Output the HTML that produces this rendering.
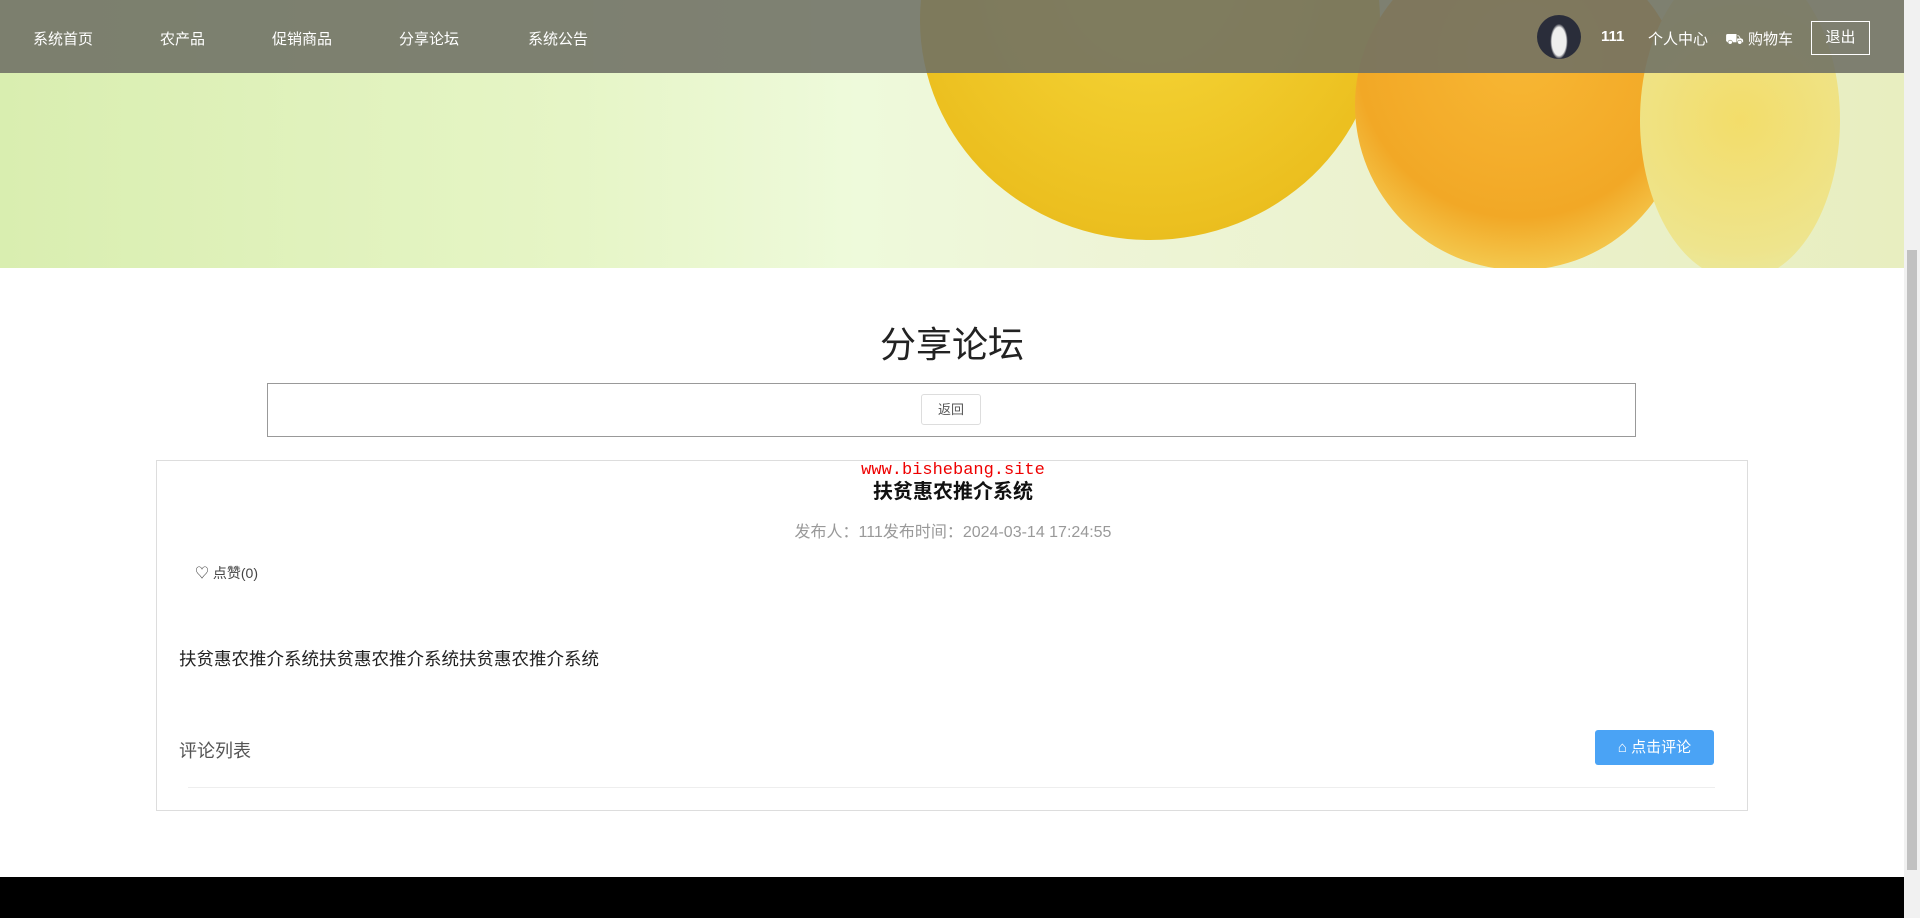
<!DOCTYPE html>
<html><head><meta charset="utf-8">
<style>
*{margin:0;padding:0;box-sizing:border-box}
body{width:1920px;height:918px;overflow:hidden;background:#fff;font-family:"Liberation Sans","Noto Sans CJK SC",sans-serif;position:relative}
.banner{position:absolute;left:0;top:0;width:1904px;height:268px;overflow:hidden;
background:linear-gradient(90deg,#d9eeb0 0%,#e6f5c6 30%,#eefadb 45%,#eef5d8 55%,#e8eec0 100%)}
.l1{position:absolute;left:920px;top:-200px;width:460px;height:440px;border-radius:50%;background:radial-gradient(circle at 50% 40%,#f6d83a,#ecc020 70%,#e2b418)}
.l2{position:absolute;left:1355px;top:-60px;width:330px;height:330px;border-radius:50%;background:radial-gradient(circle at 50% 35%,#f7b734,#f2a826 60%,#f4d25a 85%,#f8ef8a)}
.l3{position:absolute;left:1640px;top:-40px;width:200px;height:320px;border-radius:50%;background:radial-gradient(circle,#f3dd6a,#eee48c 70%,#e8eca8)}
.nav{position:absolute;left:0;top:0;width:1904px;height:73px;background:rgba(110,112,100,.88)}
.nav a{position:absolute;top:28px;color:#fff;font-size:15px;text-decoration:none}
.av{position:absolute;left:1537px;top:15px;width:44px;height:44px;border-radius:50%;background:radial-gradient(ellipse 20% 40% at 50% 60%,#eee 80%,#2a2d3a 100%)}
.out{position:absolute;left:1811px;top:21px;width:59px;height:34px;border:1px solid #fff;color:#fff;font-size:15px;text-align:center;line-height:32px}
.sb{position:absolute;right:0;top:0;width:16px;height:918px;background:#f1f1f1}
.sb i{position:absolute;left:3px;top:250px;width:10px;height:620px;background:#c1c1c1}
h1{position:absolute;left:0;width:1904px;top:316px;text-align:center;font-size:36px;font-weight:normal;color:#222}
.bar{position:absolute;left:267px;top:383px;width:1369px;height:54px;border:1px solid #999}
.back{position:absolute;left:653px;top:10px;width:60px;height:31px;border:1px solid #ddd;border-radius:3px;font-size:13px;color:#555;text-align:center;line-height:29px}
.card{position:absolute;left:156px;top:460px;width:1592px;height:351px;border:1px solid #ddd}
.wm{position:absolute;left:0;width:1592px;top:0;text-align:center;color:#e00;font-family:"Liberation Mono",monospace;font-size:17px}
.t{position:absolute;left:0;width:1592px;top:14px;text-align:center;font-size:20px;font-weight:bold;color:#111}
.m{position:absolute;left:0;width:1592px;top:57px;text-align:center;font-size:16px;color:#999}
.z{position:absolute;left:38px;top:102px;font-size:14px;color:#444}
.c{position:absolute;left:22px;top:185px;font-size:17.5px;color:#222}
.pl{position:absolute;left:22px;top:276px;font-size:18px;color:#555}
.btn{position:absolute;left:1438px;top:269px;width:119px;height:35px;background:#4aa3f5;border-radius:3px;color:#fff;font-size:15px;line-height:35px;text-align:center}
.hr{position:absolute;left:31px;top:326px;width:1527px;height:1px;background:#eee}
.ft{position:absolute;left:0;top:877px;width:1904px;height:41px;background:#000}
</style></head><body>
<div class="banner"><div class="l1"></div><div class="l2"></div><div class="l3"></div></div>
<div class="nav">
<a style="left:33px">系统首页</a><a style="left:160px">农产品</a><a style="left:272px">促销商品</a><a style="left:399px">分享论坛</a><a style="left:528px">系统公告</a>
<div class="av"></div>
<a style="left:1601px;font-weight:bold">111</a><a style="left:1648px">个人中心</a><a style="left:1725px">⛟ 购物车</a>
<div class="out">退出</div>
</div>
<div class="sb"><i></i></div>
<h1>分享论坛</h1>
<div class="bar"><div class="back">返回</div></div>
<div class="card">
<div class="wm">www.bishebang.site</div>
<div class="t">扶贫惠农推介系统</div>
<div class="m">发布人：111发布时间：2024-03-14 17:24:55</div>
<div class="z">♡ 点赞(0)</div>
<div class="c">扶贫惠农推介系统扶贫惠农推介系统扶贫惠农推介系统</div>
<div class="pl">评论列表</div>
<div class="btn">⌂ 点击评论</div>
<div class="hr"></div>
</div>
<div class="ft"></div>
</body></html>
